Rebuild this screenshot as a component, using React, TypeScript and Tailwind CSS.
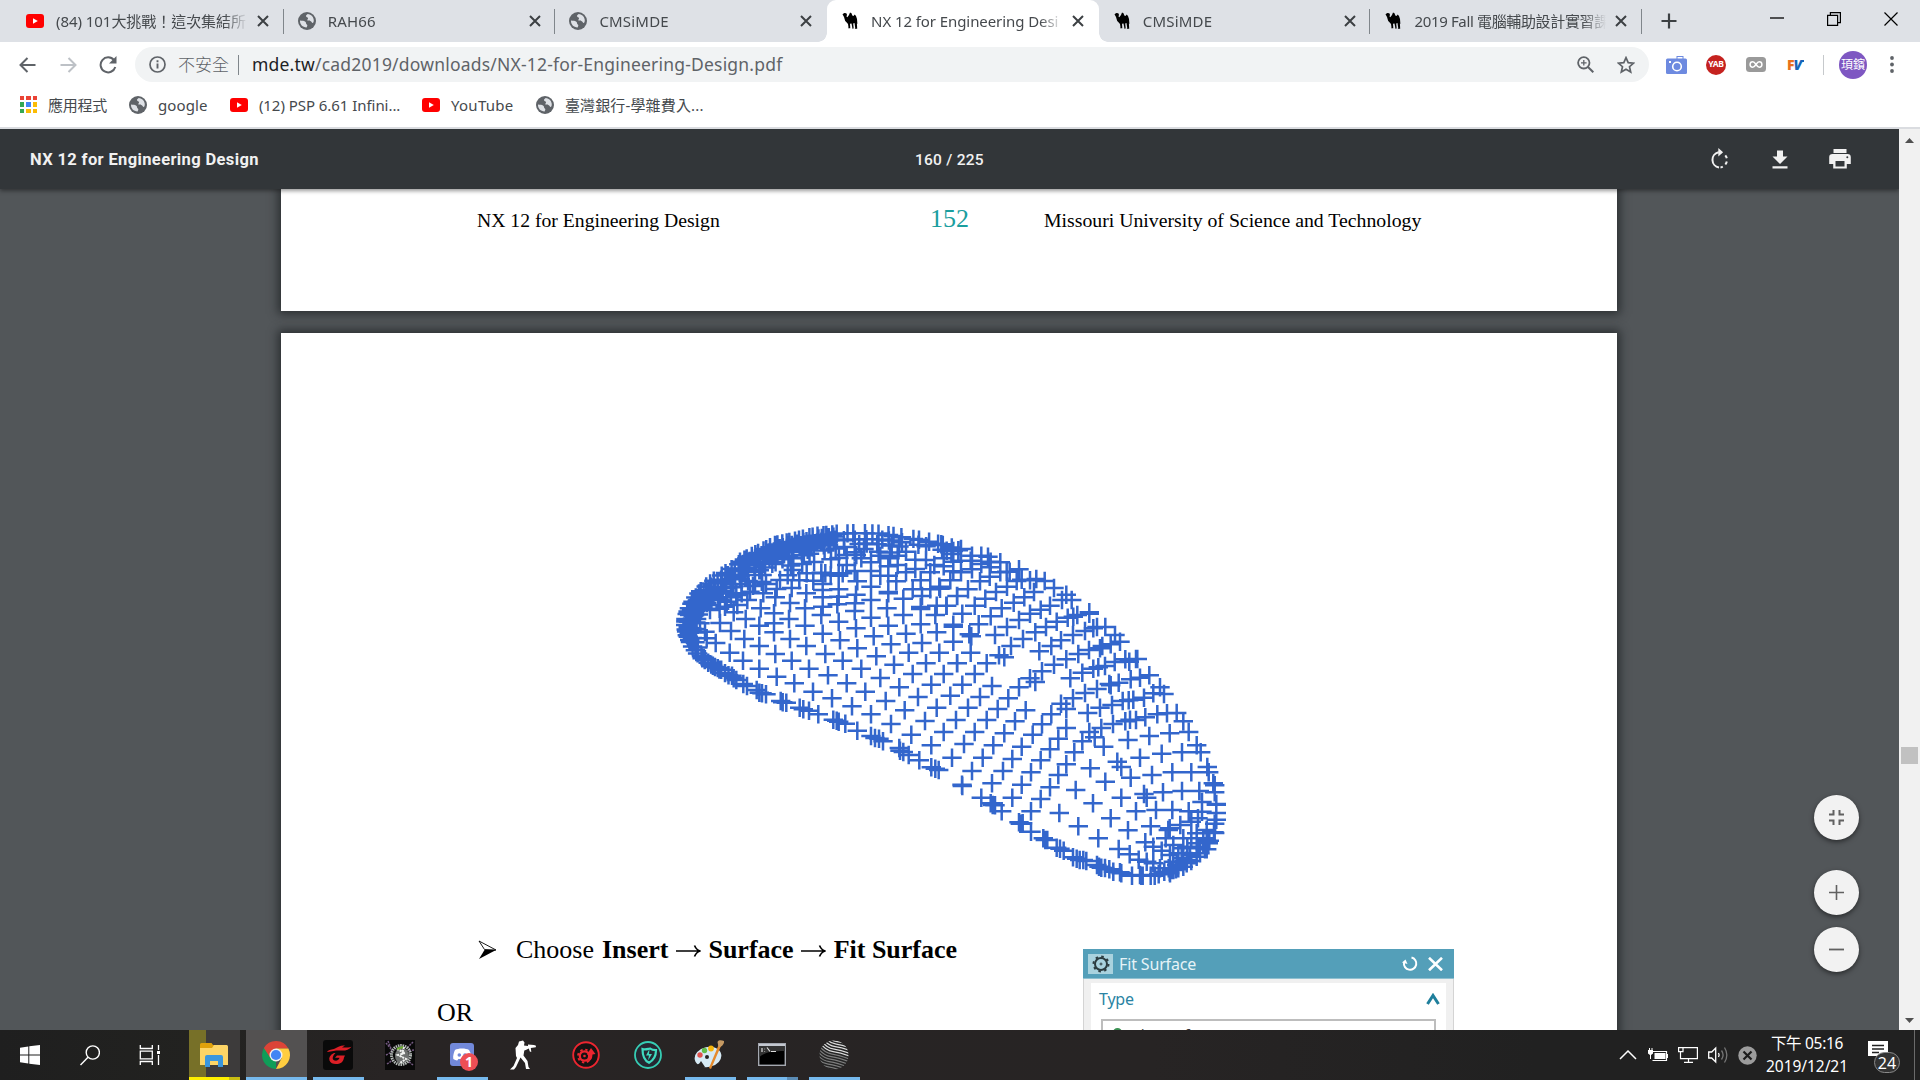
import React from "react";

type P = [number, number];

const UI = "font-['Noto_Sans','Noto_Sans_CJK_TC',sans-serif]";

/* ---------- point cloud ---------- */

const leftPoints: P[] = [
  [167,399],[209,428],[249,452],[298,476],[350,500],[403,520],[459,545],[516,565],[576,589],[633,613],[693,642],[754,674],[814,706],[876,743],
  [180,339],[213,363],[253,387],[298,408],[346,432],[395,452],[447,476],[504,496],[560,520],[616,545],[677,573],[734,601],[795,633],[851,666],
  [221,307],[257,327],[298,347],[342,367],[390,387],[439,408],[496,432],[548,452],[604,476],[661,504],[718,532],[774,561],[830,593],[888,630],
  [262,270],[302,295],[342,310],[387,327],[435,347],[488,371],[540,391],[592,415],[649,439],[702,464],[758,492],[814,524],[871,557],
  [310,250],[346,262],[390,279],[435,295],[484,315],[536,335],[588,355],[641,379],[693,403],[746,428],[798,460],[851,492],
  [395,234],[439,250],[488,262],[532,283],[584,303],[633,323],[685,347],[738,371],[786,399],[838,428],[892,460],
  [536,238],[588,254],[633,270],[681,295],[730,315],[782,343],[830,367],[880,395],
  [488,222],[592,214],[633,230],[685,246],[685,250],[730,266],[782,291],[782,297],[826,315],[880,344],[880,350],
  [661,197],[709,214],[758,238],[786,258],[811,238],[830,287],[859,287],[892,258],[838,230],[871,211],
  [633,157],[633,183],[685,169],[685,197],[713,165],[738,187],[766,149],[782,211],[811,187],[766,177],[798,150],[823,165],[851,169],[880,184],[851,145],[661,137],[690,145],[713,137],[738,125],
  [180,270],[195,290],[213,262],[232,285],[245,250],[270,245],[285,215],[318,222],[350,237],[360,210],[383,196],[400,180],[418,211],[440,190],[460,212],[484,188],[496,190],[512,196],[536,197],[548,190],[560,165],[584,183],[604,145],[560,135],[584,127],[612,117],
  [221,505],[229,510],[250,522],[261,528],[290,540],[298,548],[306,550],[318,553],[362,573],[368,577],[379,578],[419,593],[430,598],[447,602],[475,613],[520,629],[530,632],[536,635],[556,641],[592,662],[633,678],[645,684],[657,686],[669,694],[718,714],[720,722],[730,726],[746,735],[778,751],[814,772],[826,776],[836,780],
  [140,385],[135,365],[150,300],[120,340],
  [342,340],[585,280],[488,240],[488,290],[536,260],
];

const rightPoints: P[] = [
  [96,783],[156,820],[217,863],[273,904],
  [11,666],[72,702],[128,743],[189,783],[245,824],[302,867],
  [48,630],[104,666],[160,706],[217,747],[273,787],[330,832],
  [31,557],[84,593],[140,630],[193,670],[245,710],[302,751],[355,795],
  [11,492],[67,524],[120,561],[173,597],[225,634],[278,674],[330,718],[379,763],
  [51,460],[104,492],[156,528],[205,565],[257,601],[306,643],[355,686],[403,727],
  [92,428],[140,460],[193,442],[237,532],[286,516],[334,613],[379,597],[379,654],[427,694],[448,666],[491,710],[464,682],
  [88,373],[94,379],[177,436],[270,505],[363,581],
  [20,287],[67,311],[116,343],[165,375],[213,408],[298,424],[306,484],[342,464],[379,448],[391,505],[399,565],[435,549],[443,609],[484,654],[480,593],[519,642],
  [51,258],[104,287],[152,319],[201,351],[249,387],[334,408],[415,432],[427,488],[471,537],[508,522],[516,585],[548,573],[556,634],[588,630],
  [31,211],[84,238],[136,266],[185,295],[237,330],[286,367],[363,391],[399,375],[447,420],[460,476],[487,408],[495,468],[524,456],[536,518],[556,448],[572,508],[600,503],[580,569],[612,563],[640,550],[616,622],[652,613],[681,610],[710,609],
  [512,526],[566,571],[570,629],[475,472],
  [730,634],[746,666],[770,706],[782,727],[802,771],[806,787],[820,820],[824,826],
  [63,187],[120,214],[168,246],[221,278],[270,311],[318,351],[435,363],[460,355],[471,351],[496,351],[525,375],[540,395],[512,403],[480,415],
  [149,200],[201,230],[253,262],[302,299],[350,335],[383,323],[412,315],[448,307],[448,311],[400,320],
  [96,178],[149,172],[181,187],[230,213],[282,246],[330,287],[366,270],[395,270],[379,254],
  [0,236],[11,169],[40,155],[63,152],[92,152],[124,162],[152,155],
  [289,207],[314,213],[342,234],[237,178],[209,185],[181,157],[144,140],[124,137],[96,137],[63,117],[55,121],[40,123],[20,122],[4,103],[245,209],[270,211],[200,185],
  [588,447],[592,447],[568,455],[628,496],[660,532],[672,552],
  [451,775],[407,840],[358,909],[415,949],[459,880],[496,815],[475,985],[512,925],[544,863],[572,803],[532,755],[544,771],[564,690],[600,743],[636,795],[628,678],[665,731],[689,670],[726,727],[697,787],[754,787],[669,847],[726,843],[778,843],[620,863],[612,852],[588,904],[648,900],[697,900],[746,904],[786,876],[564,961],[632,949],[685,960],[689,955],[536,1017],[616,997],[677,985],[721,945],[754,935],[774,925],[786,905],[569,1033],[596,1049],[640,1010],[665,1022],[700,1005],[742,1010],
  [824,847],[829,882],[829,884],[829,909],[829,929],[824,941],[822,967],[824,969],[808,992],[800,1018],[790,985],[770,970],[754,985],[730,985],[770,1000],[730,1015],[715,1030],[690,1035],[750,1035],[770,1030],[780,1010],[800,960],[725,1045],[700,1055],[740,1050],
  [66,824],[67,828],[124,863],[152,880],[158,885],[165,886],[185,904],[237,937],[241,941],[248,940],[273,965],[310,985],[316,990],[322,990],[350,1013],[360,1016],[371,1022],[399,1042],[410,1046],[419,1050],[430,1050],[439,1053],[471,1065],[477,1070],[484,1073],[495,1074],[508,1078],[520,1085],[540,1087],[544,1090],[576,1097],[600,1095],[604,1097],[608,1097],[632,1097],[644,1097],[656,1093],[673,1085],[689,1085],[700,1080],[708,1078],[715,1075],[730,1070],[740,1060],[754,1053],[770,1040],[795,1018],
  [640,1060],[660,1075],[620,1055],[695,1080],[686,1075],[710,1065],[690,1090],[780,1030],[805,1000],[790,1000],[775,1015],
];

function at(line: P[], t: number): P {
  const f = t * (line.length - 1);
  const i = Math.min(line.length - 2, Math.floor(f));
  const u = f - i;
  return [
    line[i][0] * (1 - u) + line[i + 1][0] * u,
    line[i][1] * (1 - u) + line[i + 1][1] * u,
  ];
}

function band(outer: P[], inner: P[], layers: number, steps: number): P[] {
  const out: P[] = [];
  for (let k = 0; k < layers; k++) {
    const w = Math.pow(k / Math.max(1, layers - 1), 1.25);
    const n = Math.round(steps * (1 - 0.35 * w));
    for (let s = 0; s <= n; s++) {
      const t = Math.min(1, (s + (k % 3) * 0.33 + 0.22 * Math.sin(s * 2.3 + k)) / (n + 1));
      const a = at(outer, Math.max(0, t));
      const b = at(inner, Math.max(0, t));
      out.push([a[0] + (b[0] - a[0]) * w, a[1] + (b[1] - a[1]) * w]);
    }
  }
  return out;
}

const rim: P[] = [
  ...band(
    [[82,376],[77,350],[78,322],[88,295],[103,268],[125,240],[160,213],[205,184],[250,153]],
    [[108,368],[106,345],[112,318],[124,298],[140,280],[160,258],[190,240],[220,218],[258,200]],
    4, 20
  ),
  ...band(
    [[240,155],[292,130],[345,105],[400,93],[465,78],[530,72]],
    [[240,200],[300,180],[350,155],[400,135],[465,112],[530,98]],
    4, 22
  ),
  ...band(
    [[530,71],[600,69],[660,71],[713,80],[782,90],[843,103],[892,117]],
    [[530,92],[600,88],[660,88],[713,95],[782,105],[843,118],[892,140]],
    2, 14
  ),
  ...band([[85,380],[95,405],[120,440],[150,462],[180,480],[225,508]], [[92,376],[110,405],[125,440],[155,465],[185,480],[230,505]], 2, 13),
  ...band([[400,145],[460,128],[540,113],[610,100],[680,105],[760,115]], [[370,170],[440,160],[500,150],[560,140],[650,125],[740,130]], 2, 10),
  ...band([[150,285],[200,240],[260,215],[330,185]], [[165,310],[210,265],[270,232],[340,200]], 2, 6),
];

function cross([x, y]: P) {
  return `M${(x - 9.7).toFixed(1)} ${y.toFixed(1)}h19.4M${x.toFixed(1)} ${(y - 9.2).toFixed(1)}v18.4`;
}

const cloudPath = [
  ...[...leftPoints, ...rim].map(([x, y]): P => [x / 3 + 10, y / 3 + 10]),
  ...rightPoints.map(([x, y]): P => [x / 3 + 290, y / 3 + 10]),
]
  .map(cross)
  .join("");

function PointCloud() {
  return (
    <svg width="600" height="400" viewBox="0 0 600 400" className="block">
      <path d={cloudPath} fill="none" stroke="#3366cc" strokeWidth="2.5" />
    </svg>
  );
}

/* ---------- small icons ---------- */

const YouTube = () => (
  <svg width="18" height="18" viewBox="0 0 18 18">
    <rect x="0" y="2" width="18" height="14" rx="3" fill="#f00" />
    <path d="M7 6.300v5.400L11.800 9z" fill="#fff" />
  </svg>
);

const Globe = () => (
  <svg width="18" height="18" viewBox="0 0 18 18">
    <circle cx="9" cy="9" r="9" fill="#5f6368" />
    <path d="M2 8.500c2 .2 4.600.3 5.600 1.500.8 1 .2 2 1.200 2.600.9.6.5 1.700-.2 2.900C4.600 15.300 1.800 12.400 2 8.500zM9.700 2c-.7 1-1.900 1-1.700 2.300.2 1.200 1.700.6 2 1.700.2 1.100-.9 1.500-.6 2.300.4.9 2.200.2 3.400.9 1.100.6.9 1.900 1.900 1.800 1-.3 1.300-2.300.9-4C15 4.300 12.600 2.200 9.700 2z" fill="#dee1e6" />
  </svg>
);

const Camel = () => (
  <svg width="16" height="18" viewBox="0 0 16 18">
    <path d="M.5 2.300 2.300 1l2 .3.700 1.400-.5 1.800.8.800L7 3l1-2.500 1.500.8.800 2.200 1.200.5 1.200-1.500 1.300 1.500 1 3 .4 5-.5-.6.300 5.400h-2.400l.4-1-.7-4.800-1.300.6.500 4.800H10l.3-1-.8-4-1.500.4.300 4.500H6.200l.3-1L6 12l-1.300-1.500L3.200 9 2 5z" fill="#000" />
  </svg>
);

const CloseX = () => (
  <svg width="12" height="12" viewBox="0 0 12 12">
    <path d="M1 1l10 10M11 1L1 11" stroke="#3c4043" strokeWidth="2" />
  </svg>
);

/* ---------- browser chrome ---------- */

const tabs = [
  { icon: <YouTube />, title: "(84) 101大挑戰！這次集結所", tight: "tracking-[-0.050px]" },
  { icon: <Globe />, title: "RAH66", tight: "tracking-[0.150px]" },
  { icon: <Globe />, title: "CMSiMDE", tight: "tracking-[0.200px]" },
  { icon: <Camel />, title: "NX 12 for Engineering Desi", active: true, tight: "tracking-[-0.080px]" },
  { icon: <Camel />, title: "CMSiMDE", tight: "tracking-[0.200px]" },
  { icon: <Camel />, title: "2019 Fall 電腦輔助設計實習課", tight: "tracking-[-0.350px]" },
];

function TabStrip() {
  return (
    <div className="flex h-[42px] shrink-0 bg-[#dee1e6] pl-[12px]">
      {tabs.map((t, i) => (
        <div
          key={i}
          className={
            "relative flex h-[42px] w-[271.700px] shrink-0 items-center pl-[14px] " +
            (t.active ? "rounded-t-[9px] bg-white" : "")
          }
        >
          {t.active && (
            <>
              <span className="absolute -left-[9px] bottom-0 size-[9px] bg-[radial-gradient(circle_at_0_0,transparent_8.500px,white_9px)]" />
              <span className="absolute -right-[9px] bottom-0 size-[9px] bg-[radial-gradient(circle_at_100%_0,transparent_8.500px,white_9px)]" />
            </>
          )}
          <span className="flex w-[18px] justify-center">{t.icon}</span>
          <span
            className={`ml-[12px] w-[194px] overflow-hidden whitespace-nowrap text-[15px] leading-[24px] text-[#45494d] [mask-image:linear-gradient(to_right,black_87%,transparent_99%)] ${t.tight}`}
          >
            {t.title}
          </span>
          <span className="ml-[7px]">
            <CloseX />
          </span>
          {!t.active && i !== 2 && <span className="absolute right-0 top-[9px] h-[25px] w-px bg-[#80868b]" />}
        </div>
      ))}
      <div className="flex grow items-center pl-[19px]">
        <svg width="16" height="16" viewBox="0 0 16 16"><path d="M8 .5v15M.5 8h15" stroke="#3c4043" strokeWidth="2.200" /></svg>
        <div className="ml-auto flex items-center gap-[43px] pb-[4px] pr-[22px]">
          <svg width="14" height="14" viewBox="0 0 14 14"><path d="M0 6h14" stroke="#000" strokeWidth="1.300" /></svg>
          <svg width="14" height="14" viewBox="0 0 14 14" fill="none" stroke="#000" strokeWidth="1.200"><path d="M.6 3.400h10v10H.600zM3.400 3.400V.6h10v10h-2.800" /></svg>
          <svg width="14" height="14" viewBox="0 0 14 14"><path d="M.5.5l13 13M13.500.5l-13 13" stroke="#000" strokeWidth="1.200" /></svg>
        </div>
      </div>
    </div>
  );
}

function AddressBar() {
  return (
    <div className="flex h-[45px] shrink-0 items-center bg-white">
      <svg className="ml-[19px]" width="17" height="16" viewBox="0 0 17 16" fill="none" stroke="#5f6368" strokeWidth="2"><path d="M16.500 8H1.500M8.500 1l-7 7 7 7" /></svg>
      <svg className="ml-[24px]" width="17" height="16" viewBox="0 0 17 16" fill="none" stroke="#bdc1c6" strokeWidth="2"><path d="M.5 8h15M8.500 1l7 7-7 7" /></svg>
      <svg className="ml-[22px]" width="18" height="18" viewBox="0 0 18 18"><path d="M15 4.200A7.500 7.500 0 1 0 16.300 11" fill="none" stroke="#5f6368" strokeWidth="2" /><path d="M17.500 0v7.500H10z" fill="#5f6368" /></svg>
      <div className="ml-[18px] flex h-[35px] w-[1514px] items-center rounded-full bg-[#f1f3f4] pl-[14px] pr-[14px]">
        <svg width="17" height="17" viewBox="0 0 17 17"><circle cx="8.500" cy="8.500" r="7.500" fill="none" stroke="#5f6368" strokeWidth="1.700" /><path d="M8.500 7.500v5M8.500 4.300v1.900" stroke="#5f6368" strokeWidth="1.900" /></svg>
        <span className="ml-[12px] w-[60px] text-[17px] font-light leading-none text-[#5f6368]">不安全</span>
        <span className="h-[20px] w-px bg-[#80868b]" />
        <span className="ml-[13px] whitespace-nowrap text-[17.500px] leading-none tracking-[0.200px] text-[#5f6368]">
          <span className="text-[#202124]">mde.tw</span>/cad2019/downloads/NX-12-for-Engineering-Design.pdf
        </span>
        <svg className="ml-auto" width="17" height="17" viewBox="0 0 17 17" fill="none" stroke="#5f6368"><circle cx="6.800" cy="6.800" r="5.700" strokeWidth="1.800" /><path d="M11 11l5.300 5.300" strokeWidth="2" /><path d="M6.800 4v5.600M4 6.800h5.600" strokeWidth="1.300" /></svg>
        <svg className="ml-[23px]" width="18" height="18" viewBox="0 0 18 18" fill="none" stroke="#5f6368" strokeWidth="1.700"><path d="M9 1.700l2.200 5 5.300.5-4 3.500 1.200 5.300L9 13.200 4.300 16l1.200-5.300-4-3.500 5.300-.5z" /></svg>
      </div>
      <svg className="ml-[17px]" width="21" height="18" viewBox="0 0 21 18"><rect y="2.500" width="21" height="15.500" rx="1.500" fill="#6d8ae0" /><rect x="11" y=".5" width="6" height="3" fill="none" stroke="#6d8ae0" /><circle cx="11" cy="10.500" r="4.300" fill="none" stroke="#fff" strokeWidth="1.600" /><rect x="3" y="5" width="2" height="2" fill="#fff" /></svg>
      <span className="ml-[19px] flex size-[20px] items-center justify-center rounded-full bg-[#c5221f] text-[8.500px] font-bold tracking-[-0.300px] text-white">YAB</span>
      <svg className="ml-[20px]" width="20" height="15" viewBox="0 0 20 15"><rect width="20" height="15" rx="3.500" fill="#9a9a9a" /><path d="M10 7.500C8.500 5.300 7.800 4.800 6.800 4.800a2.700 2.700 0 0 0 0 5.400c1 0 1.700-.5 3.200-2.700 1.500-2.200 2.200-2.700 3.200-2.700a2.700 2.700 0 0 1 0 5.400c-1 0-1.700-.5-3.200-2.700z" fill="none" stroke="#fff" strokeWidth="1.500" /></svg>
      <span className="ml-[21px] flex w-[18px] text-[14px] font-black leading-none tracking-[-1px]"><span className="text-[#e8711c]">F</span><span className="italic text-[#1565b8]">V</span><i className="mt-[2px] h-[2px] w-[3px] bg-[#1565b8]" /></span>
      <span className="ml-[18px] h-[20px] w-px bg-[#c6c9cc]" />
      <span className="ml-[15px] flex size-[28px] items-center justify-center rounded-full bg-[#7e57c2] text-[12px] leading-none text-white">頊鑌</span>
      <svg className="ml-[23px]" width="4" height="17" viewBox="0 0 4 17" fill="#5f6368"><circle cx="2" cy="2" r="1.900" /><circle cx="2" cy="8.500" r="1.900" /><circle cx="2" cy="15" r="1.900" /></svg>
    </div>
  );
}

const appColors = [
  "bg-[#ea4335]", "bg-[#ea4335]", "bg-[#ea4335]",
  "bg-[#34a853]", "bg-[#4285f4]", "bg-[#fbbc05]",
  "bg-[#34a853]", "bg-[#fbbc05]", "bg-[#fbbc05]",
];

function BookmarkBar() {
  const label = "ml-[11px] whitespace-nowrap";
  return (
    <div className="flex h-[42px] shrink-0 items-center border-b-2 border-[#dadce0] bg-white pb-[5px] pl-[20px] text-[15px] leading-[20px] text-[#45494d]">
      <span className="grid grid-cols-3 gap-[2px]">
        {appColors.map((c, i) => <i key={i} className={`size-[4.300px] ${c}`} />)}
      </span>
      <span className="ml-[11px] w-[81px] tracking-[-0.200px]">應用程式</span>
      <Globe />
      <span className={`${label} w-[72px] tracking-[0.150px]`}>google</span>
      <YouTube />
      <span className={`${label} w-[163px] tracking-[-0.050px]`}>(12) PSP 6.61 Infini...</span>
      <YouTube />
      <span className={`${label} w-[85px] tracking-[0.300px]`}>YouTube</span>
      <Globe />
      <span className={`${label} tracking-[0.150px]`}>臺灣銀行-學雜費入...</span>
    </div>
  );
}

/* ---------- pdf viewer ---------- */

function PdfToolbar() {
  return (
    <div className="relative z-10 flex h-[60px] shrink-0 items-center bg-[#323639] font-[Roboto,sans-serif] text-[#f1f1f1] shadow-[0_2px_4px_rgba(0,0,0,0.4)]">
      <span className="w-[885px] pl-[30px] pt-[3px] text-[16.500px] font-bold tracking-[0.370px]">NX 12 for Engineering Design</span>
      <span className="w-[825px] pl-[30px] pt-[3px] text-[15.500px] font-medium tracking-[0.250px]">160 / 225</span>
      <svg width="20" height="22" viewBox="0 0 20 22" fill="none" stroke="#f1f1f1" strokeWidth="2"><path d="M9 19.500A7.800 7.800 0 0 1 8.500 4.200" /><path d="M8.500 4.300c1 0 2.200.1 3 .4M15.300 7.300a7.800 7.800 0 0 1 1.500 3M16.800 13.500a7.800 7.800 0 0 1-1.400 3M12.800 18.700a7.800 7.800 0 0 1-2.300.8" /><path d="M8.300 0v8.500l4.800-4.200z" fill="#f1f1f1" stroke="none" /></svg>
      <svg className="ml-[42px]" width="16" height="19" viewBox="0 0 16 19" fill="#f1f1f1"><path d="M5 .5h6v6h4.500L8 14 .5 6.500H5zM.5 16.300h15v2.200H.5z" /></svg>
      <svg className="ml-[41px]" width="22" height="20" viewBox="0 0 22 20" fill="#f1f1f1"><path d="M4.500 0h13v4h-13zM3.500 5h15a3.300 3.300 0 0 1 3.300 3.300V15h-4v4.500H4.200V15h-4V8.300A3.300 3.300 0 0 1 3.500 5z" /><path d="M6.500 12h9v5.500h-9z" fill="#323639" /><circle cx="18.300" cy="8.300" r="1" fill="#323639" /></svg>
    </div>
  );
}

const Arrow = () => (
  <svg className="mx-[6.500px] mt-[2px]" width="27" height="14" viewBox="0 0 27 14" fill="none" stroke="#000" strokeWidth="1.700"><path d="M1 7h24M19.500 1.500C21 5 23 6.500 25.500 7 23 7.500 21 9 19.500 12.500" /></svg>
);

function Dialog() {
  return (
    <div className="absolute left-[802px] top-[616px] h-[81px] w-[371px] border-x border-[#d4d4d4] bg-[#f0f0f0] font-['Noto_Sans',sans-serif]">
      <div className="-mx-px flex h-[30px] items-center border-b border-[#8fc0d0] bg-[#549fb9] pl-[5px] pr-[11px]">
        <span className="flex h-[20px] w-[25px] items-center justify-center bg-[#a9d2de]">
          <svg width="18" height="18" viewBox="0 0 18 18" fill="none" stroke="#2c3c40"><circle cx="9" cy="9" r="6" strokeWidth="2" /><circle cx="9" cy="9" r="7.500" strokeWidth="2" strokeDasharray="2.500 3.390" /><circle cx="9" cy="9" r="1" /></svg>
        </span>
        <span className="ml-[6px] text-[16px] leading-none tracking-[-0.150px] text-[#e6f3f7]">Fit Surface</span>
        <svg className="ml-auto" width="16" height="16" viewBox="0 0 16 16" fill="none" stroke="#fff"><path d="M9.500 1.500A6.200 6.200 0 1 1 2 6.500" strokeWidth="2" /><path d="M0 6.500l3.500-3 2 4.500z" fill="#fff" stroke="none" /></svg>
        <svg className="ml-[10px]" width="15" height="14" viewBox="0 0 15 14"><path d="M1 .8l13 12.500M14 .8L1 13.300" stroke="#fff" strokeWidth="2.600" /></svg>
      </div>
      <div className="mx-[7px] mt-[4px] h-[47px] bg-white pl-[9px]">
        <div className="flex h-[31px] items-center pr-[6px]">
          <span className="-ml-px text-[16px] leading-none tracking-[-0.200px] text-[#2a83a3]">Type</span>
          <svg className="ml-auto" width="14" height="12" viewBox="0 0 14 12"><path d="M1.500 11L7 2.500 12.500 11" fill="none" stroke="#1f7f9c" strokeWidth="3" /></svg>
        </div>
        <div className="ml-[1px] mt-[5px] flex h-[30px] w-[335px] gap-[11px] border-2 border-[#bdbdbd] pl-[10px] pt-[6px]">
          <span className="mt-px size-[9px] rounded-full bg-[#3b9153]" />
          <span className="text-[15px] leading-[14px] text-[#333]">Fit Freeform</span>
        </div>
      </div>
    </div>
  );
}

const pageShadow = "shadow-[0_0_9px_3px_rgba(30,33,36,0.75)]";

function Fab({ children, gap }: { children: React.ReactNode; gap: string }) {
  return <div className={`flex size-[45px] items-center justify-center rounded-full bg-[#f2f2f2] shadow-[0_2px_5px_rgba(0,0,0,0.5)] ${gap}`}>{children}</div>;
}

function Viewer() {
  return (
    <div className="relative flex h-[901px] w-[1899px] flex-col overflow-hidden bg-[#525659] font-['Liberation_Serif',serif] text-black">
      <PdfToolbar />
      <div className={`ml-[281px] flex h-[122px] w-[1336px] shrink-0 items-start bg-white ${pageShadow}`}>
        <span className="ml-[196px] mt-[19px] w-[453px] whitespace-nowrap text-[19.700px] leading-[24px]">NX 12 for Engineering Design</span>
        <span className="mt-[14px] w-[114px] text-[26px] leading-[32px] text-[#1b9e9e]">152</span>
        <span className="mt-[19px] whitespace-nowrap text-[19.750px] leading-[24px]">Missouri University of Science and Technology</span>
      </div>
      <div className={`relative ml-[281px] mt-[22px] h-[760px] w-[1336px] shrink-0 bg-white ${pageShadow}`}>
        <div className="pl-[369px] pt-[167px]"><PointCloud /></div>
        <div className="mt-[34px] flex h-[32px] items-center whitespace-nowrap pl-[197px] text-[26px] leading-none">
          <svg width="19" height="20" viewBox="0 0 19 20"><path d="M1 1l17 9-11.500-.5z" fill="#fff" stroke="#000" strokeWidth=".9" /><path d="M6.500 10H18L1 19z" fill="#000" /></svg>
          <span className="ml-[19px] w-[86px]">Choose</span>
          <b>Insert</b><Arrow /><b>Surface</b><Arrow /><b>Fit Surface</b>
        </div>
        <div className="mt-[34px] pl-[156px] text-[26px] leading-[26px]">OR</div>
        <Dialog />
      </div>
      <div className="absolute right-[40px] top-[666px] flex flex-col">
        <Fab gap="">
          <svg width="15" height="15" viewBox="0 0 15 15" fill="none" stroke="#616161" strokeWidth="2"><path d="M0 4.500h4.500V0M10.500 0v4.500H15M0 10.500h4.500V15M10.500 15v-4.500H15" /></svg>
        </Fab>
        <Fab gap="mt-[30px]">
          <svg width="15" height="15" viewBox="0 0 15 15" stroke="#616161" strokeWidth="1.600"><path d="M7.500 0v15M0 7.500h15" /></svg>
        </Fab>
        <Fab gap="mt-[12px]">
          <svg width="15" height="15" viewBox="0 0 15 15" stroke="#616161" strokeWidth="1.800"><path d="M0 7.500h15" /></svg>
        </Fab>
      </div>
    </div>
  );
}

function Scrollbar() {
  return (
    <div className="flex w-[21px] flex-col items-center bg-[#f1f1f1]">
      <svg className="mt-[9px]" width="9" height="5" viewBox="0 0 9 5"><path d="M0 5L4.500 0 9 5z" fill="#505050" /></svg>
      <div className="mt-[604px] size-[17px] bg-[#c1c1c1]" />
      <svg className="mb-[7px] mt-auto" width="9" height="5" viewBox="0 0 9 5"><path d="M0 0l4.500 5L9 0z" fill="#505050" /></svg>
    </div>
  );
}

/* ---------- taskbar ---------- */

function Slot({ w, ml, bar, bg = "", children }: { w: string; ml: string; bar?: string; bg?: string; children: React.ReactNode }) {
  return (
    <div className={`relative flex h-full shrink-0 items-center justify-center ${w} ${ml} ${bg}`}>
      {children}
      {bar && <span className={`absolute inset-x-0 bottom-0 h-[3px] ${bar}`} />}
    </div>
  );
}

const stripes = Array.from({ length: 15 }, (_, i) => i);

function Taskbar() {
  return (
    <div className="flex h-[50px] w-full shrink-0 items-center overflow-hidden bg-[linear-gradient(90deg,#1f1f1f,#222220_10%,#282424_20%,#272424_60%,#212121_80%)] text-white">
      <svg className="ml-[20px] shrink-0" width="20" height="20" viewBox="0 0 20 20" fill="#fff"><path d="M0 2.700l8.300-1.200v8H0zM9.300 1.300L20 0v9.500H9.300zM0 10.500h8.300v8L0 17.300zM9.300 10.500H20V20L9.300 18.700z" /></svg>
      <svg className="ml-[40px] shrink-0" width="20" height="21" viewBox="0 0 20 21" fill="none" stroke="#fff" strokeWidth="1.400"><circle cx="12.800" cy="7.500" r="6.600" /><path d="M8 12.300L.5 20" /></svg>
      <svg className="ml-[39px] shrink-0" width="22" height="20" viewBox="0 0 22 20" fill="none" stroke="#fff" strokeWidth="1.300"><path d="M1.300 0v3.500h12V0M1.300 20v-3.500h12V20M1.300 6.200h12v7.600h-12zM19.500 0v5M19.500 10v10" /><path d="M18 6h3v3h-3z" fill="#fff" stroke="none" /></svg>

      <Slot w="w-[51px]" ml="ml-[28px]" bg="bg-[linear-gradient(90deg,#777028_17px,#3d3b3b_17px)]" bar="bg-[linear-gradient(90deg,#fff000_40px,#c9bd12_40px)]">
        <svg className="-ml-[2px] -mt-[1px]" width="28" height="24" viewBox="0 0 28 24"><path d="M0 1.500A1.500 1.500 0 0 1 1.500 0h10L13 2h14v20H0z" fill="#dfa10c" /><path d="M0 5h12l2-3h12.500A1.500 1.500 0 0 1 28 3.500V22H0z" fill="#fcd466" /><path d="M5 24V14a2 2 0 0 1 2-2h14a2 2 0 0 1 2 2v10h-5v-6h-8v6z" fill="#3a96dd" /></svg>
      </Slot>
      <Slot w="w-[61px]" ml="ml-[6px]" bg="bg-[#535151]" bar="bg-[#76b9ed]">
        <svg className="-ml-[2px] -mt-[1px]" width="28" height="28" viewBox="0 0 28 28"><path d="M14 14v0L14 28A14 14 0 0 1 1.880 7z" fill="#0f9d58" /><path d="M14 7.500h12.400A14 14 0 0 0 1.880 7l6.500 10z" fill="#db4437" /><path d="M19.600 17.200L14 28A14 14 0 0 0 26.400 7.500H14z" fill="#ffcd40" /><circle cx="14" cy="14" r="6.500" fill="#f1f1f1" /><circle cx="14" cy="14" r="5.100" fill="#4285f4" /></svg>
      </Slot>
      <Slot w="w-[51px]" ml="ml-[6px]" bar="bg-[#76b9ed]">
        <svg className="-ml-[1px]" width="30" height="30" viewBox="0 0 30 30"><rect width="30" height="30" rx="3" fill="#0a0a0a" /><path d="M4 12c2-3 5-2 8-3.500 3-1.800 6-3.500 10-3l-3 2c3 0 5 .5 9.500-.8-2.500 3.300-6 4-10.500 3.800-5-.3-8 .5-14 1.500z" fill="#dc1f26" /><path d="M11 13c-4 2-5.500 4.500-4.500 7.500 1 2.700 4 4 8 3.500 4-.5 6-3 6.500-6.500l1-2h-8l-2 2.300h4.500c-.5 2-2.500 3.300-5 2.700-2.500-.7-2.500-4 1-7.500z" fill="#dc1f26" /></svg>
      </Slot>
      <Slot w="w-[30px]" ml="ml-[21px]">
        <svg width="30" height="30" viewBox="0 0 30 30"><rect width="30" height="30" fill="#090909" /><path d="M1 3l5 6M3 1l4 10M1 15l6-3M2 24l6-4M28 2l-5 5M29 10l-6 1M28 25l-5-4" stroke="#765b83" strokeWidth="1.500" strokeDasharray="2 1" /><ellipse cx="17" cy="16" rx="7" ry="8" fill="#6d706f" /><circle cx="16" cy="15" r="9.500" fill="none" stroke="#b4bab7" strokeWidth="3" strokeDasharray="1.500 .8" /><path d="M12 9l8 4-7 2 8 4-6 4M19 7l-3 10" fill="none" stroke="#f0f2f0" strokeWidth="2" strokeDasharray="2 1" /><path d="M12 9l6-2" stroke="#6fae35" strokeWidth="2" /></svg>
      </Slot>
      <Slot w="w-[51px]" ml="ml-[22px]" bar="bg-[#76b9ed]">
        <svg className="-mt-[1px]" width="30" height="30" viewBox="0 0 30 30"><rect x="2" y="3" width="24" height="23" rx="3" fill="#7289da" /><path d="M7 10c3-2 11-2 14 0 2 3 2.500 6 2.300 9-2 1.500-4 1.500-4 1.500l-1-1.500h-8l-1 1.500s-2 0-4-1.500C4.700 16 6 12 7 10z" fill="#fff" /><circle cx="11.300" cy="15" r="1.800" fill="#7289da" /><circle cx="17" cy="15" r="1.800" fill="#7289da" /></svg>
        <span className="absolute left-[23px] top-[23px] flex size-[18px] items-center justify-center rounded-full bg-[#ee4f55] font-['Noto_Sans',sans-serif] text-[14px] font-bold leading-none">1</span>
      </Slot>
      <Slot w="w-[28px]" ml="ml-[21px]">
        <svg width="26" height="30" viewBox="0 0 26 30" fill="#fff"><path d="M9 1.500l4-1 1.500 2-.5 3 4 .5V4.500l6 .5 2 .8-.2 1.400-5 .8.500 4-1.500-.5-1-3-3 1.500-1.500.5-.8 5 4 5.500 1 6 1.500 2h-4l-1-6-4.500-5.500L6 27l-2 2.500H0L3.500 26 7 18l-1-2-.5-8L8 5z" /></svg>
      </Slot>
      <Slot w="w-[28px]" ml="ml-[35px]">
        <svg width="28" height="28" viewBox="0 0 28 28"><circle cx="14" cy="14" r="12.800" fill="#151313" stroke="#ec2630" strokeWidth="1.900" /><circle cx="12.500" cy="15" r="4.700" fill="none" stroke="#ec2630" strokeWidth="2.300" /><circle cx="12.500" cy="15" r="6.500" fill="none" stroke="#ec2630" strokeWidth="1.800" strokeDasharray="2.400 2.700" /><circle cx="12.500" cy="15" r="1.300" fill="#ec2630" /><path d="M15 13.500l4-6.500 4.500 6-3 .5c0 4-2 6.500-5 7.500 1.500-2 2-4 1.500-7z" fill="#ec2630" /></svg>
      </Slot>
      <Slot w="w-[28px]" ml="ml-[34px]">
        <svg width="28" height="28" viewBox="0 0 28 28"><circle cx="14" cy="14" r="13" fill="#252832" stroke="#36cdb4" strokeWidth="1.800" /><path d="M8.500 8c3 1 5 0 7.500-.5 1.500 1.200 3 1.700 6 1.700 0 6-2.500 10-7 12.500-4.500-2-6.500-6-6.500-13.700z" fill="none" stroke="#3fdac0" strokeWidth="2.200" /><path d="M15.500 8l-3.500 6.500h3l-1 5 4-6.500h-3z" fill="#3fdac0" /></svg>
      </Slot>
      <Slot w="w-[51px]" ml="ml-[23px]" bar="bg-[#76b9ed]">
        <svg className="-ml-[3px]" width="30" height="30" viewBox="0 0 30 30"><ellipse cx="14" cy="17" rx="13.500" ry="10" transform="rotate(-12 14 17)" fill="#d6eaf5" /><path d="M2 25c3-1 4-2 5-4l4 6H5z" fill="#272424" /><circle cx="13" cy="17" r="2" fill="#272424" /><circle cx="6" cy="15" r="2.700" fill="#e0524d" /><circle cx="10.500" cy="10.500" r="2.700" fill="#63bd4a" /><circle cx="17" cy="8.500" r="2.900" fill="#f6b50b" /><path d="M25 4l2 2-10 23-2-1z" fill="#e58a2c" /><path d="M23.500 2c2-3 5-1 7-1-1 3-2 6-6 6z" fill="#c69a63" /></svg>
      </Slot>
      <Slot w="w-[51px]" ml="ml-[11px]" bar="bg-[linear-gradient(90deg,#76b9ed_40px,#5b8cb5_40px)]">
        <svg className="-ml-[2px] -mt-[2px]" width="28" height="23" viewBox="0 0 28 23"><rect x=".7" y=".7" width="26.600" height="21.600" fill="#000" stroke="#a4a8b0" strokeWidth="1.400" /><path d="M1 1h26v2H1z" fill="#c4c8d0" /><path d="M1.500 3h25v5C15 8 7 9 1.500 14z" fill="#333" /><path d="M4 5v4M6.500 6h.6M6.500 8.500h.6M9 4.500l3 4M13 8.500h5" stroke="#ddd" strokeWidth="1.200" /></svg>
      </Slot>
      <Slot w="w-[51px]" ml="ml-[11px]" bar="bg-[#76b9ed]">
        <svg className="-ml-[2px] -mt-[1px]" width="30" height="30" viewBox="0 0 30 30"><defs><clipPath id="ball"><circle cx="15" cy="15" r="14.500" /></clipPath></defs><g clipPath="url(#ball)"><rect width="30" height="30" fill="#242424" /><g transform="rotate(22 15 15)">{stripes.map((i) => <path key={i} d={`M-4 ${i * 2.7 - 8}q9 6 17 4t20 -2`} fill="none" stroke={i < 7 ? "#dcdcdc" : "#7d7d7d"} strokeWidth="1.200" />)}</g></g></svg>
      </Slot>

      <div className="ml-auto flex h-full items-center">
        <svg width="18" height="10" viewBox="0 0 18 10" fill="none" stroke="#fff" strokeWidth="1.500"><path d="M1 9l8-8 8 8" /></svg>
        <svg className="ml-[11px]" width="20" height="14" viewBox="0 0 20 14"><path d="M4.500 3.500H18.500v9h-14" fill="none" stroke="#fff" strokeWidth="1.200" /><path d="M6.500 5h11v6h-11zM19 6h1.200v4H19zM0 2h5v3.500l-2 1.500v4H2V7L0 5.500zM1 0h1v2H1zM3.500 0h1v2h-1z" fill="#fff" /></svg>
        <svg className="ml-[10px]" width="20" height="16" viewBox="0 0 20 16" fill="none" stroke="#fff" strokeWidth="1.200"><path d="M5 .7h14.400v11H2.500V5M10.500 12v3M6 15.300h9M.6.700H5v4H.6z" /></svg>
        <svg className="ml-[10px]" width="20" height="18" viewBox="0 0 20 18" fill="none" stroke="#fff" strokeWidth="1.300"><path d="M.7 6h3l4-4v14l-4-4h-3zM10.500 7c.8 1.200.8 2.800 0 4" /><path d="M13.500 4.500c2 2.800 2 6.200 0 9M16.500 1.500c3 4.800 3 10.200 0 15" stroke="#777" /></svg>
        <svg className="ml-[10px]" width="19" height="19" viewBox="0 0 19 19"><circle cx="9.500" cy="9.500" r="9.200" fill="#9c9c9c" /><path d="M5.500 5.500l8 8M13.500 5.500l-8 8" stroke="#1c1c1c" strokeWidth="2.200" /></svg>
        <div className="ml-[6px] w-[88px] whitespace-nowrap text-center text-[15.500px] leading-[23px] tracking-[-0.050px]">
          <div className="tracking-[-0.300px]">下午 05:16</div>
          <div>2019/12/21</div>
        </div>
        <div className="relative ml-[17px] h-[30px] w-[46px]">
          <svg width="21" height="20" viewBox="0 0 21 20"><path d="M0 1h20v15H0z" fill="#fff" /><path d="M4 5.500h12M4 9h12M4 12.500h7" stroke="#222" strokeWidth="1.300" /></svg>
          <span className="absolute left-[6px] top-[12px] flex h-[21px] w-[26px] items-center justify-center rounded-full border border-[#8a8a8a] bg-[#333] text-[16px] leading-none">24</span>
        </div>
        <span className="mr-[5px] h-full w-px bg-[#6b6b6b]" />
      </div>
    </div>
  );
}

export default function App() {
  return (
    <div className={`flex h-[1080px] w-[1920px] flex-col overflow-hidden bg-white ${UI}`}>
      <TabStrip />
      <AddressBar />
      <BookmarkBar />
      <div className="flex h-[901px] shrink-0">
        <Viewer />
        <Scrollbar />
      </div>
      <Taskbar />
    </div>
  );
}
